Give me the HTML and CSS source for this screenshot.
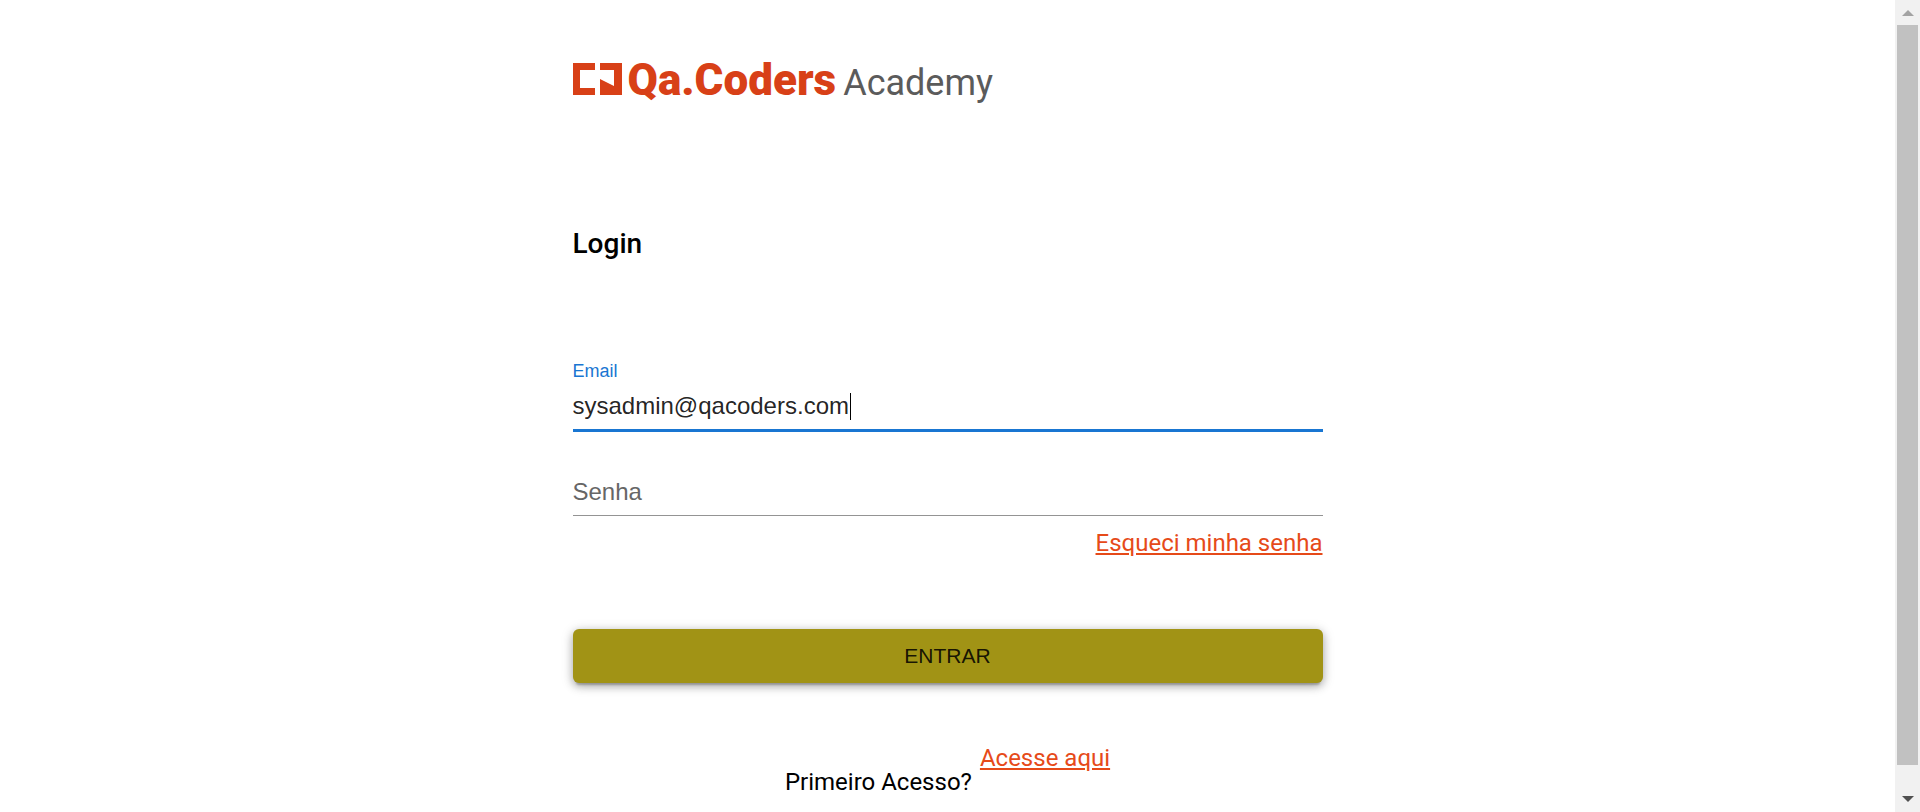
FILE: index.html
```html
<!DOCTYPE html>
<html lang="pt-BR">
<head>
<meta charset="utf-8">
<meta name="viewport" content="width=device-width, initial-scale=1">
<title>Qa.Coders Academy - Login</title>
<link rel="stylesheet" href="styles.css">
</head>
<body>
<main class="page">
  <div class="panel">
    <header class="logo">
      <svg class="logo-mark" viewBox="0 0 49 32" aria-hidden="true">
        <path d="M0 0h22v7H7v18h15v7H0z"/>
        <path d="M27 0h22v32H27V16l14 7V7H27z"/>
      </svg>
      <span class="logo-name">Qa.Coders</span>
      <span class="logo-suffix">Academy</span>
    </header>
    <h1 class="title">Login</h1>
    <form class="form">
      <div class="field field-active">
        <label class="field-label" for="email">Email</label>
        <input class="field-input" id="email" type="email" value="sysadmin@qacoders.com">
        <span class="caret" aria-hidden="true"></span>
      </div>
      <div class="field field-password">
        <input class="field-input" id="senha" type="password" placeholder="Senha" aria-label="Senha">
      </div>
      <a class="link forgot" href="#">Esqueci minha senha</a>
      <button class="submit" type="submit">ENTRAR</button>
    </form>
    <footer class="signup">
      <p class="signup-text">Primeiro Acesso?</p>
      <a class="link" href="#">Acesse aqui</a>
    </footer>
  </div>
</main>
<div class="scrollbar" aria-hidden="true">
  <svg class="arrow arrow-up" viewBox="0 0 12 6"><path d="M0 6L6 0l6 6z"/></svg>
  <div class="thumb"></div>
  <svg class="arrow arrow-down" viewBox="0 0 12 6"><path d="M0 0h12L6 6z"/></svg>
</div>
</body>
</html>
```
FILE: styles.css
```css
* { box-sizing: border-box; }
body {
  margin: 0;
  height: 100vh;
  display: flex;
  overflow: hidden;
  background: #fff;
  color: #000;
  font-family: Roboto, "Liberation Sans", sans-serif;
  font-size: 24px;
}
.page {
  flex: 1;
  min-width: 0;
  display: flex;
  justify-content: center;
  align-items: flex-start;
}
.panel { width: 100%; max-width: 750px; padding-top: 54px; }
.logo { display: flex; align-items: baseline; line-height: 52px; }
.logo-mark { width: 49px; height: 32px; fill: #d84017; margin-right: 6px; }
.logo-name { color: #d84017; font-size: 44px; font-weight: 900; }
.logo-suffix { color: #5b5b5b; font-size: 36px; font-weight: 400; margin-left: 7px; }
.title { margin: 117px 0 0; font-size: 28px; font-weight: 500; line-height: 36px; }
.form { display: flex; flex-direction: column; margin-top: 97px; }
.field { position: relative; display: flex; flex-direction: column; border-bottom: 1px solid #949494; }
.field-active { border-bottom: 3px solid #1976d2; }
.field-label {
  color: #1976d2;
  font-family: "Liberation Sans", Arial, sans-serif;
  font-size: 18px;
  line-height: 24px;
}
.field-input {
  width: 100%;
  height: 46px;
  padding: 0;
  border: 0;
  outline: 0;
  background: transparent;
  color: rgba(0, 0, 0, .87);
  font-family: "Liberation Sans", Arial, sans-serif;
  font-size: 24px;
}
.field-input::placeholder { color: #666; opacity: 1; }
.caret { position: absolute; left: 277px; bottom: 9px; width: 1px; height: 27px; background: #000; }
.field-password { margin-top: 37px; }
.link { color: #e64a19; line-height: 36px; text-decoration: underline; }
.forgot { align-self: flex-end; margin-top: 9px; }
.submit {
  margin-top: 68px;
  height: 54px;
  border: 0;
  border-radius: 6px;
  background: #a19315;
  color: rgba(0, 0, 0, .87);
  font-family: "Liberation Sans", Arial, sans-serif;
  font-size: 21px;
  box-shadow: 0 5px 2px -3px rgba(0, 0, 0, .2), 0 3px 8px rgba(0, 0, 0, .28), 0 2px 14px rgba(0, 0, 0, .14);
}
.signup { display: flex; justify-content: center; gap: 8px; margin-top: 57px; }
.signup-text { margin: 24px 0 0; line-height: 36px; }
.scrollbar {
  width: 25px;
  padding: 10px 2px;
  display: flex;
  flex-direction: column;
  align-items: center;
  background: #f1f1f1;
}
.arrow { width: 12px; height: 6px; flex: none; }
.arrow-up { fill: #a3a3a3; }
.arrow-down { fill: #505050; }
.thumb { flex: 1; width: 100%; margin: 9px 0 31px; background: #c1c1c1; }
```
